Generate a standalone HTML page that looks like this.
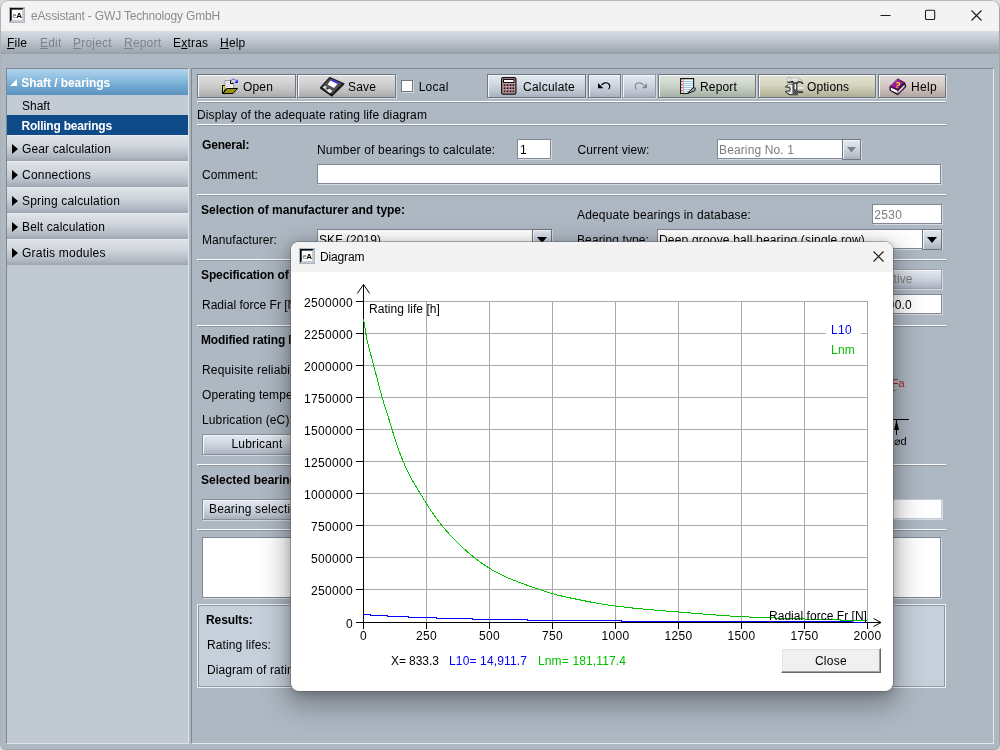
<!DOCTYPE html>
<html><head><meta charset="utf-8"><title>eAssistant</title>
<style>
*{box-sizing:border-box;margin:0;padding:0}
html,body{width:1000px;height:750px;overflow:hidden;background:#dcdcdc;font-family:"Liberation Sans",sans-serif;font-size:12px;color:#000}
.a{position:absolute;white-space:nowrap}
.t{position:absolute;white-space:nowrap;line-height:14px;height:14px;letter-spacing:.15px}
.b{font-weight:bold;letter-spacing:-.1px}
#win{will-change:transform;position:absolute;left:0;top:0;width:1000px;height:750px;border-radius:8px 8px 6px 6px;overflow:hidden;background:#aeb8c3}
#winb{position:absolute;left:0;top:0;width:1000px;height:750px;border:1px solid #a4a4a4;border-top-color:#b9b9b9;border-left-color:#b0b0b0;border-radius:8px 8px 6px 6px;pointer-events:none}
#tbar{position:absolute;left:0;top:0;width:1000px;height:31px;background:#f3f3f3}
#mbar{position:absolute;left:0;top:31px;width:1000px;height:23px;background:linear-gradient(#d7dce3 0%,#c4cad3 35%,#abb3bd 72%,#98a0ab 100%)}
.mi{position:absolute;top:5px;line-height:15px;font-size:12px;letter-spacing:.2px}
.mi u{text-decoration-thickness:1px;text-underline-offset:1px}
.dis{color:#7b828b}
/* sidebar */
#side{position:absolute;left:6px;top:68px;width:183px;height:676px;border:1px solid #7e8893;border-right-color:#dfe4ea;border-bottom-color:#dfe4ea;background:#c1c9d2}
.sh{position:absolute;left:0;width:181px}
.acc{height:26px;background:linear-gradient(#e0e4e9 0%,#ccd2d9 45%,#b3bac4 80%,#9da5b0 100%);border-top:1px solid #e9ecef}
.tri{position:absolute;left:5px;top:7.5px;width:0;height:0;border-left:6px solid #000;border-top:5px solid transparent;border-bottom:5px solid transparent}
/* main */
#main{position:absolute;left:191px;top:68px;width:803px;height:676px;border:1px solid #7e8893;border-right-color:#e4e8ee;border-bottom-color:#e4e8ee}
.sep{position:absolute;left:196px;width:749px;height:2px;border-top:1px solid #fff;border-bottom:1px solid #8d96a1;border-left:1px solid #fff}
.btn{position:absolute;height:24px;border:1px solid #707780;box-shadow:inset 1px 1px 0 #f4f6f8,1px 1px 0 #d3d9df;text-align:center;line-height:22px;white-space:nowrap;letter-spacing:.3px}
.g1{background:linear-gradient(#dedede 0%,#cfcfcf 45%,#b9b9b9 80%,#aaa 100%)}
.g2{background:linear-gradient(#e3e8f0 0%,#d0d7e1 45%,#b9c1cd 80%,#a8b1be 100%)}
.g3{background:linear-gradient(#dfe5dd 0%,#cdd5cb 45%,#b5beb3 80%,#a5afa3 100%)}
.g4{background:linear-gradient(#e4e4d2 0%,#d5d5c0 45%,#bdbda6 80%,#adad96 100%)}
.g5{background:linear-gradient(#e3dbd7 0%,#d4cbc7 45%,#beb3af 80%,#afa4a0 100%)}
.fld{position:absolute;height:20px;background:#fff;border:1px solid #7f8995;box-shadow:1px 1px 0 #d5dae0;line-height:18px;padding-top:1px;padding-left:2px;white-space:nowrap;letter-spacing:.15px}
.gray{color:#7d7d7d}
/* dialog */
#dlg{position:absolute;left:291px;top:242px;width:602px;height:449px;background:#fff;border-radius:8px;box-shadow:0 0 0 1px rgba(90,95,100,.45),0 10px 28px 4px rgba(0,0,0,.33),0 2px 10px rgba(0,0,0,.2);overflow:hidden}
#dtb{position:absolute;left:0;top:0;width:602px;height:30px;background:#f3f3f3}
svg text{font-family:"Liberation Sans",sans-serif;font-size:12px}
</style></head><body>
<div id="win">
<div id="tbar">
  <svg class="a" style="left:9px;top:7px" width="16" height="16" viewBox="0 0 16 16"><rect width="16" height="16" fill="#a9b7c6"/><path d="M1 1H15L13.500 2.600H2.600V13.500L1 15Z" fill="#0a0a0a"/><path d="M15 1V15H1L3 13H13V3Z" fill="#cbcbcb"/><rect x="3" y="3" width="10" height="10" fill="#fff"/><text x="7.300" y="11" style="font-size:8px;font-weight:bold" fill="#000">A</text><text x="3.600" y="11" style="font-size:7px;font-style:italic" fill="#555">e</text></svg>
  <div class="a" style="left:31px;top:8px;font-size:12px;line-height:16px;color:#8b8b8b;letter-spacing:-.17px">eAssistant - GWJ Technology GmbH</div>
  <svg class="a" style="left:861px;top:1px" width="138" height="30" viewBox="0 0 138 30"><g stroke="#1a1a1a" stroke-width="1.1" fill="none"><path d="M19.5 14.5h10"/><rect x="64.500" y="9.300" width="9.200" height="9.200" rx="1.300"/><path d="M110.500 9.500l10 10M120.500 9.500l-10 10"/></g></svg>
</div>
<div id="mbar">
  <div class="mi" style="left:7px"><u>F</u>ile</div>
  <div class="mi dis" style="left:40px"><u>E</u>dit</div>
  <div class="mi dis" style="left:73px"><u>P</u>roject</div>
  <div class="mi dis" style="left:124px"><u>R</u>eport</div>
  <div class="mi" style="left:173px">E<u>x</u>tras</div>
  <div class="mi" style="left:220px"><u>H</u>elp</div>
</div>

<div id="side">
  <div class="sh" style="top:0;height:26px;background:linear-gradient(#b0d4ec 0%,#8fbfe0 35%,#6ea5cf 70%,#5c94c0 100%)">
    <svg class="a" style="left:2px;top:9px" width="9" height="9"><path d="M8 1V8H1Z" fill="#fff"/></svg>
    <div class="t b" style="left:14.200px;top:7px;color:#fff;letter-spacing:-0.064px">Shaft / bearings</div>
  </div>
  <div class="sh" style="top:26px;height:20px;background:#c3cbd4"><div class="t" style="left:15px;top:4px;letter-spacing:-0.004px">Shaft</div></div>
  <div class="sh" style="top:46px;height:20px;background:#0f4b88"><div class="t b" style="left:14.500px;top:4px;color:#fff;letter-spacing:-.23px">Rolling bearings</div></div>
  <div class="sh acc" style="top:66px"><i class="tri"></i><div class="t" style="left:15px;top:6px;letter-spacing:0.143px">Gear calculation</div></div>
  <div class="sh acc" style="top:92px"><i class="tri"></i><div class="t" style="left:15px;top:6px;letter-spacing:0.209px">Connections</div></div>
  <div class="sh acc" style="top:118px"><i class="tri"></i><div class="t" style="left:15px;top:6px;letter-spacing:0.182px">Spring calculation</div></div>
  <div class="sh acc" style="top:144px"><i class="tri"></i><div class="t" style="left:15px;top:6px;letter-spacing:0.143px">Belt calculation</div></div>
  <div class="sh acc" style="top:170px"><i class="tri"></i><div class="t" style="left:15px;top:6px;letter-spacing:.21px">Gratis modules</div></div>
</div>

<div id="main"></div>
<!-- MAINCONTENT --><div class="a" style="left:1px;top:1px;width:0;height:0">
<!-- toolbar -->
<div class="btn g1" style="left:196px;top:73px;width:99px"></div>
<div class="t" style="left:242px;top:79px;letter-spacing:0.161px">Open</div>
<div class="btn g1" style="left:296px;top:73px;width:99px"></div>
<div class="t" style="left:347px;top:79px;letter-spacing:0.162px">Save</div>
<div class="a" style="left:400px;top:79px;width:12px;height:12px;background:#fff;border:1px solid #6f7882;box-shadow:1px 1px 0 #d3d9df"></div>
<div class="t" style="left:417.700px;top:79px;letter-spacing:0.263px">Local</div>
<div class="btn g2" style="left:486px;top:73px;width:99px"></div>
<div class="t" style="left:522px;top:79px;letter-spacing:0.219px">Calculate</div>
<div class="btn g2" style="left:587px;top:73px;width:33px"></div>
<div class="btn g2" style="left:621px;top:73px;width:34px;border-color:#929ba6"></div>
<div class="btn g3" style="left:657px;top:73px;width:98px"></div>
<div class="t" style="left:699px;top:79px;letter-spacing:0.164px">Report</div>
<div class="btn g4" style="left:757px;top:73px;width:118px"></div>
<div class="t" style="left:806px;top:79px;letter-spacing:0.092px">Options</div>
<div class="btn g5" style="left:877px;top:73px;width:68px"></div>
<div class="t" style="left:910px;top:79px;letter-spacing:0.330px">Help</div>
<!-- open icon at (222,78) page => wrapper coords (221,77) -->
<svg class="a" style="left:221px;top:77px" width="17" height="17" viewBox="0 0 17 17">
 <path d="M0.500 7.500H3.500V11L1.200 15.500H0.500Z" fill="#d8d24e" stroke="#000"/>
 <path d="M3 2.500H8.500L11.500 5.500V10.500H3Z" fill="#f6f6f6" stroke="#8a8a8a" stroke-width=".8"/>
 <path d="M4.500 4.500H7.500M4.500 6.500H9.500M4.500 8.500H9.500" stroke="#c8c8c8" stroke-width=".8"/>
 <path d="M8.500 2.500V5.500H11.500" fill="none" stroke="#000" stroke-width="1"/>
 <path d="M5 10.500H15.500L11 15.500H0.800Z" fill="#97930d" stroke="#000"/>
 <path d="M9.300 2.300Q11.800 -.3 14.300 2.800" fill="none" stroke="#3232e6" stroke-width="1" stroke-dasharray="1.6 .7"/>
 <path d="M15.800 1.300V5H12.300Z" fill="#1c1cff"/>
</svg>
<!-- save icon at (320,77) -->
<svg class="a" style="left:319px;top:76px" width="25" height="20" viewBox="0 0 25 20">
 <path d="M9.700 .600L23.600 6.700L11.700 18.400L.600 10.600Z" fill="#505050" stroke="#222" stroke-width="1.400"/>
 <path d="M.600 10.600L11.700 18.400L23.600 6.700" fill="none" stroke="#1a1a1a" stroke-width="2"/>
 <path d="M10.500 3.500L17.500 7L14 11L7.500 7.500Z" fill="#fff"/>
 <path d="M11.500 2.800L18.500 6.300" stroke="#3a3af0" stroke-width="1.800"/>
 <path d="M2.700 10.300L5.500 8.700L12.500 14L9.800 16.200Z" fill="#e9e9e9"/>
 <path d="M5.300 11L7.200 10L9.300 11.600L7.500 12.800Z" fill="#333"/>
</svg>
<!-- calc icon at (501,77) -->
<svg class="a" style="left:500px;top:76px" width="16" height="18" viewBox="0 0 16 18">
 <rect x=".6" y=".6" width="14.300" height="16.600" rx="1.600" fill="#c79da2" stroke="#111" stroke-width="1.200"/>
 <rect x="2.500" y="2.500" width="10.500" height="3" fill="#fff" stroke="#111"/>
 <g fill="#111"><rect x="2.700" y="7.300" width="1.700" height="1.700"/><rect x="5.700" y="7.300" width="1.700" height="1.700"/><rect x="8.700" y="7.300" width="1.700" height="1.700"/><rect x="11.500" y="7.300" width="1.700" height="1.700"/>
 <rect x="2.700" y="10.400" width="1.700" height="1.700"/><rect x="5.700" y="10.400" width="1.700" height="1.700"/><rect x="8.700" y="10.400" width="1.700" height="1.700"/><rect x="11.500" y="10.400" width="1.700" height="1.700"/>
 <rect x="2.700" y="13.500" width="1.700" height="1.700"/><rect x="5.700" y="13.500" width="1.700" height="1.700"/><rect x="8.700" y="13.500" width="1.700" height="1.700"/><rect x="11.500" y="13.500" width="1.700" height="1.700"/></g>
</svg>
<!-- undo at page (598..610, 81..89) -->
<svg class="a" style="left:596px;top:79px" width="16" height="12" viewBox="0 0 16 12">
 <path d="M1 3V8.300H6.300Z" fill="#000"/>
 <path d="M4.500 5.200C6.500 2.600 9.800 1.900 11.800 4C13.200 5.500 12.800 7.600 11.700 9.300" fill="none" stroke="#000" stroke-width="1.150"/>
</svg>
<svg class="a" style="left:631px;top:79px" width="16" height="12" viewBox="0 0 16 12">
 <path d="M15 3V8.300H9.700Z" fill="#8a8a8a"/>
 <path d="M11.500 5.200C9.500 2.600 6.200 1.900 4.200 4C2.800 5.500 3.200 7.600 4.300 9.300" fill="none" stroke="#8a8a8a" stroke-width="1.200"/>
</svg>
<!-- report at (680,78) -->
<svg class="a" style="left:679px;top:77px" width="17" height="17" viewBox="0 0 17 17">
 <path d="M.600 .600H13.600V9.500L7.500 15.500H.600Z" fill="#fdfdfd" stroke="#111" stroke-width="1.100"/>
 <path d="M4 3.500H13M4 5.500H13M4 7.500H13M4 9.500H12M4 11.500H10M4 13.500H8" stroke="#8cc2ea" stroke-width=".9"/>
 <path d="M3.200 1V15" stroke="#f07070" stroke-width="1"/>
 <path d="M7.500 15.500L13.600 9.500L15.300 10.300L14.700 12.800Z" fill="#b0b0b0" stroke="#111" stroke-width="1"/>
 <g fill="#333"><rect x="1.400" y="3" width="1" height="1"/><rect x="1.400" y="6" width="1" height="1"/><rect x="1.400" y="9" width="1" height="1"/><rect x="1.400" y="12" width="1" height="1"/></g>
</svg>
<!-- options at (785,77) -->
<svg class="a" style="left:784px;top:76px" width="20" height="20" viewBox="0 0 20 20">
 <defs><linearGradient id="shg" x1="0" y1="0" x2="0" y2="1"><stop offset="0" stop-color="#fff"/><stop offset=".55" stop-color="#bdbdbd"/><stop offset="1" stop-color="#6a6a6a"/></linearGradient>
 <pattern id="chk" x=".3" y=".8" width="2" height="2" patternUnits="userSpaceOnUse"><rect width="2" height="2" fill="#0a0a0a"/><rect width="1" height="1" fill="#9a9a9a"/><rect x="1" y="1" width="1" height="1" fill="#9a9a9a"/></pattern></defs>
 <path d="M7.800 7.300Q3.200 6.300 .400 9.900L4.600 10.400Q5.700 12.200 4.600 14L.400 14.300Q3.200 18.600 8.400 17.600Z" fill="#d2d2d2" stroke="#151515" stroke-width=".9"/>
 <path d="M3 8.300Q5 7.600 7 8.200L6.600 10.500Q6.900 12.200 6.600 14L5.500 16.800" fill="none" stroke="#fff" stroke-width="1"/>
 <rect x="12.300" y="10.300" width="5.800" height="4.700" fill="url(#shg)"/>
 <path d="M12.300 15.200H18.100" stroke="#0a0a0a" stroke-width="1.100"/>
 <rect x="8.500" y="5.800" width="3.800" height="12.300" fill="#111"/>
 <rect x="9.400" y="6.300" width="1.900" height="6.400" fill="#f1f1f1"/>
 <rect x="7.800" y="12.800" width="5" height="5.400" fill="url(#chk)"/>
 <path d="M2.400 .600H5.800L6.800 1.100H12.600Q16.800 1.500 18.100 6.900Q16.300 4.500 13.200 4.800L12.400 6H8.400L7.400 4.600Q5 5.600 2.400 5.100Z" fill="#d9d9d9" stroke="#8a8a8a" stroke-width=".5"/>
 <path d="M2.400 5.100Q5 5.600 7.400 4.600L8.400 6H12.400L13.200 4.800Q16.300 4.500 18.100 6.900" fill="none" stroke="#0d0d0d" stroke-width="1.200"/>
 <path d="M3.200 1.600V4.200M7.500 2H12.500" stroke="#fff" stroke-width="1"/>
</svg>
<!-- help at (889,78) -->
<svg class="a" style="left:888px;top:77px" width="19" height="19" viewBox="0 0 19 19">
 <path d="M1.100 8.200L1.100 12.400L8.800 16.800L16.900 8.800L15.600 4.600L8.800 11.700Z" fill="#0c0c0c" stroke="#0c0c0c" stroke-width=".9" stroke-linejoin="round"/>
 <path d="M2 9.600L8.700 12.800V15.600L2 12.300Z" fill="#fafafa"/>
 <path d="M9.300 12.700L15.300 6.400L15.900 8.400L9.300 15.400Z" fill="#d4d4d4"/>
 <path d="M9 16.300L16.500 8.700" stroke="#a018a6" stroke-width=".9" stroke-dasharray="1 .6"/>
 <path d="M8.800 .800L15.500 4.600L8.800 11.700L1.100 8.200Z" fill="#9a14a0" stroke="#2a002c" stroke-width=".7" stroke-linejoin="round"/>
 <path d="M1.100 8.200V11.800" stroke="#9a14a0" stroke-width="1.100"/>
 <path d="M2.300 7.300L8.300 1.900" stroke="#e7c3ea" stroke-width=".8" stroke-dasharray=".8 .8"/>
 <text x="6.300" y="10" style="font-size:8.500px;font-weight:bold" fill="#f5ee14" transform="rotate(14 9 6)">?</text>
</svg>


<div class="sep" style="top:100px"></div>
<div class="t" style="left:196px;top:107px;letter-spacing:0.121px">Display of the adequate rating life diagram</div>
<div class="sep" style="top:123px"></div>

<div class="t b" style="left:201px;top:137px;letter-spacing:-.18px">General:</div>
<div class="t" style="left:316px;top:142px;letter-spacing:.175px">Number of bearings to calculate:</div>
<div class="fld" style="left:516px;top:138px;width:34px;letter-spacing:0.327px">1</div>
<div class="t" style="left:576.5px;top:142px;letter-spacing:0.101px">Current view:</div>
<div class="fld gray" style="left:716px;top:138px;width:144px;padding-left:1px;letter-spacing:0.125px">Bearing No. 1</div>
<div class="btn g2" style="left:841px;top:138px;width:19px;height:21px;box-shadow:inset 1px 1px 0 #f4f6f8"><svg class="a" style="left:4px;top:7px" width="9" height="6"><path d="M0 0H9L4.500 5.500Z" fill="#7a828c"/></svg></div>
<div class="t" style="left:201px;top:167px;letter-spacing:0.081px">Comment:</div>
<div class="fld" style="left:316px;top:163px;width:624px"></div>
<div class="sep" style="top:193px"></div>

<div class="t b" style="left:200px;top:202px;letter-spacing:-0.020px">Selection of manufacturer and type:</div>
<div class="t" style="left:576px;top:207px;letter-spacing:0.151px">Adequate bearings in database:</div>
<div class="fld gray" style="left:871px;top:203px;width:70px;padding-left:1.300px;letter-spacing:0.327px">2530</div>
<div class="t" style="left:201px;top:232px;letter-spacing:0.074px">Manufacturer:</div>
<div class="fld" style="left:316px;top:228px;width:235px;padding-left:1px;letter-spacing:0.064px">SKF (2019)</div>
<div class="btn g2" style="left:531px;top:228px;width:20px;height:21px;box-shadow:inset 1px 1px 0 #f4f6f8"><svg class="a" style="left:4px;top:7px" width="11" height="6"><path d="M0 0H10L5 6Z" fill="#000"/></svg></div>
<div class="t" style="left:576px;top:232px;letter-spacing:0.099px">Bearing type:</div>
<div class="fld" style="left:656px;top:228px;width:285px;padding-left:1px;letter-spacing:0.177px">Deep groove ball bearing (single row)</div>
<div class="btn g2" style="left:921px;top:228px;width:20px;height:21px;box-shadow:inset 1px 1px 0 #f4f6f8"><svg class="a" style="left:4px;top:7px" width="11" height="6"><path d="M0 0H10L5 6Z" fill="#000"/></svg></div>
<div class="sep" style="top:258px"></div>

<div class="t b" style="left:200px;top:267px;letter-spacing:-0.107px">Specification of load:</div>
<div class="btn g2 gray" style="left:840px;top:268px;width:101px;height:20px;line-height:18px;box-shadow:inset 1px 1px 0 #f4f6f8,1px 1px 0 #d5dae0;border-color:#9aa3ae;letter-spacing:0.081px">Inactive</div>
<div class="t" style="left:201px;top:297px;letter-spacing:0.015px">Radial force Fr [N]:</div>
<div class="fld" style="left:841px;top:293px;width:100px;padding-left:31px;letter-spacing:0.216px">1000.0</div>
<div class="sep" style="top:324px"></div>

<div class="t b" style="left:200px;top:332px;letter-spacing:-0.127px">Modified rating life:</div>
<div class="t" style="left:201px;top:362px;letter-spacing:0.165px">Requisite reliability:</div>
<div class="t" style="left:201px;top:387px;letter-spacing:0.088px">Operating temperature:</div>
<div class="t" style="left:201px;top:412px;letter-spacing:0.135px">Lubrication (eC):</div>
<div class="btn g2" style="left:201px;top:433px;width:110px;height:21px;line-height:19px;box-shadow:inset 1px 1px 0 #f4f6f8,1px 1px 0 #d5dae0;border-color:#858e99;letter-spacing:0.182px">Lubricant</div>
<div class="a" style="left:892px;top:389px;width:2px;height:1px;background:#b02020"></div><div class="t" style="left:890.5px;top:375px;color:#b02020;font-size:11.5px;letter-spacing:-0.210px">Fa</div>
<svg class="a" style="left:880px;top:414px" width="40" height="32"><path d="M0 4.500H28" stroke="#000" fill="none"/><path d="M15.500 5V20" stroke="#000"/><path d="M15.500 5L13 15H18Z" fill="#000"/><text x="12.500" y="29.500" style="font-size:11px">⌀d</text></svg>
<div class="sep" style="top:463px"></div>

<div class="t b" style="left:200px;top:472px;letter-spacing:-0.002px">Selected bearing:</div>
<div class="btn g2" style="left:201px;top:498px;width:130px;height:21px;line-height:19px;text-align:left;padding-left:6px;box-shadow:inset 1px 1px 0 #f4f6f8,1px 1px 0 #d5dae0;border-color:#858e99;letter-spacing:0.173px">Bearing selection</div>
<div class="fld" style="left:400px;top:498px;width:541px;border-color:#c4ccd5"></div>
<div class="sep" style="top:528px"></div>
<div class="fld" style="left:201px;top:536px;width:739px;height:61px"></div>

<div class="a" style="left:196px;top:603px;width:749px;height:84px;background:#c6d0db;border:1px solid #eef1f4;box-shadow:inset 0 0 0 1px #8f98a3"></div>
<div class="t b" style="left:205px;top:612px;letter-spacing:-.08px">Results:</div>
<div class="t" style="left:206px;top:637px;letter-spacing:0.100px">Rating lifes:</div>
<div class="t" style="left:206px;top:662px;letter-spacing:0.085px">Diagram of rating life:</div>
</div><!-- /MAINCONTENT -->
<!-- DIALOG -->
<div id="dlg">
 <div id="dtb">
  <svg class="a" style="left:8px;top:6px" width="16" height="16" viewBox="0 0 16 16"><rect width="16" height="16" fill="#a9b7c6"/><path d="M1 1H15L13.500 2.600H2.600V13.500L1 15Z" fill="#0a0a0a"/><path d="M15 1V15H1L3 13H13V3Z" fill="#cbcbcb"/><rect x="3" y="3" width="10" height="10" fill="#fff"/><text x="7.300" y="11" style="font-size:8px;font-weight:bold" fill="#000">A</text><text x="3.600" y="11" style="font-size:7px;font-style:italic" fill="#555">e</text></svg>
  <div class="a" style="left:29px;top:7px;font-size:12px;line-height:16px;letter-spacing:-.15px">Diagram</div>
  <svg class="a" style="left:580.700px;top:8px" width="14" height="14"><path d="M1.500 1.500l10 10M11.500 1.500l-10 10" stroke="#1a1a1a" stroke-width="1.1" fill="none"/></svg>
 </div>
 <svg class="a" style="left:0;top:30px" width="602" height="419" viewBox="291 272 602 419" shape-rendering="crispEdges">
  <g stroke="#a9a9a9" stroke-width="1" fill="none">
   <path d="M364 301.500H868M364 333.500H868M364 365.500H868M364 397.500H868M364 429.500H868M364 461.500H868M364 493.500H868M364 525.500H868M364 557.500H868M364 589.500H868"/>
   <path d="M426.500 301V622M489.500 301V622M552.500 301V622M615.500 301V622M678.500 301V622M741.500 301V622M804.500 301V622M867.500 301V622"/>
  </g>
  <rect x="826" y="322" width="35" height="16" fill="#fff"/>
  <g stroke="#000" stroke-width="1" fill="none">
   <path d="M363.500 284V629M356 622.500H881"/>
   <path d="M356 301.500H363M356 333.500H363M356 365.500H363M356 397.500H363M356 429.500H363M356 461.500H363M356 493.500H363M356 525.500H363M356 557.500H363M356 589.500H363"/>
   <path d="M426.500 622V629M489.500 622V629M552.500 622V629M615.500 622V629M678.500 622V629M741.500 622V629M804.500 622V629M867.500 622V629"/>
  </g>
  <g stroke="#000" stroke-width="1" fill="none" shape-rendering="auto">
   <path d="M357.300 293.500L363.500 284.500L369.700 293.500M873.500 618.500L881 622.500L873.500 626.500"/>
  </g>
  <g shape-rendering="crispEdges" fill="none" stroke-width="1">
   <path id="gcurve" stroke="#00c000" d="M363.5 319.0 L366.5 337.5 L369.5 350.0 L372.5 360.8 L375.5 372.5 L378.5 384.1 L381.5 395.2 L384.5 405.4 L387.5 414.8 L390.5 424.2 L393.5 434.1 L396.5 443.6 L399.5 452.1 L402.5 459.8 L405.5 466.8 L408.5 473.1 L411.5 478.9 L414.5 484.1 L417.5 488.9 L420.5 493.8 L423.5 498.9 L426.5 503.8 L429.5 508.4 L432.5 512.9 L435.5 517.2 L438.5 521.3 L441.5 525.1 L444.5 528.7 L447.5 532.1 L450.5 535.4 L453.5 538.5 L456.5 541.6 L459.5 544.5 L462.5 547.4 L465.5 550.1 L468.5 552.8 L471.5 555.3 L474.5 557.7 L477.5 560.0 L480.5 562.3 L483.5 564.4 L486.5 566.4 L489.5 568.3 L492.5 570.1 L495.5 571.8 L498.5 573.4 L501.5 574.9 L504.5 576.3 L507.5 577.7 L510.5 578.9 L513.5 580.2 L516.5 581.3 L519.5 582.5 L522.5 583.6 L525.5 584.7 L528.5 585.7 L531.5 586.8 L534.5 587.8 L537.5 588.8 L540.5 589.9 L543.5 590.9 L546.5 591.9 L549.5 592.9 L552.5 593.7 L555.5 594.5 L558.5 595.3 L561.5 596.0 L564.5 596.7 L567.5 597.3 L570.5 598.0 L573.5 598.6 L576.5 599.2 L579.5 599.8 L582.5 600.4 L585.5 601.0 L588.5 601.6 L591.5 602.2 L594.5 602.8 L597.5 603.3 L600.5 603.8 L603.5 604.3 L606.5 604.8 L609.5 605.2 L612.5 605.7 L615.5 606.1 L618.5 606.4 L621.5 606.8 L624.5 607.1 L627.5 607.5 L630.5 607.8 L633.5 608.1 L636.5 608.4 L639.5 608.7 L642.5 609.0 L645.5 609.3 L648.5 609.5 L651.5 609.8 L654.5 610.1 L657.5 610.3 L660.5 610.6 L663.5 610.8 L666.5 611.1 L669.5 611.3 L672.5 611.5 L675.5 611.8 L678.5 612.0 L681.5 612.3 L684.5 612.5 L687.5 612.8 L690.5 613.0 L693.5 613.3 L696.5 613.5 L699.5 613.8 L702.5 614.0 L705.5 614.2 L708.5 614.5 L711.5 614.7 L714.5 614.9 L717.5 615.1 L720.5 615.4 L723.5 615.6 L726.5 615.8 L729.5 616.0 L732.5 616.1 L735.5 616.3 L738.5 616.5 L741.5 616.6 L744.5 616.8 L747.5 616.9 L750.5 617.1 L753.5 617.2 L756.5 617.3 L759.5 617.4 L762.5 617.6 L765.5 617.7 L768.5 617.8 L771.5 617.9 L774.5 618.0 L777.5 618.1 L780.5 618.2 L783.5 618.3 L786.5 618.4 L789.5 618.5 L792.5 618.6 L795.5 618.7 L798.5 618.8 L801.5 618.9 L804.5 619.0 L807.5 619.1 L810.5 619.2 L813.5 619.3 L816.5 619.4 L819.5 619.4 L822.5 619.5 L825.5 619.6 L828.5 619.7 L831.5 619.7 L834.5 619.8 L837.5 619.9 L840.5 620.0 L843.5 620.0 L846.5 620.1 L849.5 620.2 L852.5 620.2 L855.5 620.3 L858.5 620.4 L861.5 620.5 L864.5 620.5 L867.5 620.6"/>
   <path id="bcurve" stroke="#0000ff" d="M363 614.500H370V615.500H387V616.500H408V617.500H436V618.500H472V619.500H527V620.500H621V621.500H851V622.500H868"/>
  </g>
  <g text-anchor="end" fill="#000">
   <text x="353" y="306.7" style="letter-spacing:0.327px">2500000</text><text x="353" y="338.7" style="letter-spacing:0.327px">2250000</text><text x="353" y="370.7" style="letter-spacing:0.327px">2000000</text><text x="353" y="402.7" style="letter-spacing:0.327px">1750000</text><text x="353" y="434.7" style="letter-spacing:0.327px">1500000</text><text x="353" y="466.7" style="letter-spacing:0.327px">1250000</text><text x="353" y="498.7" style="letter-spacing:0.327px">1000000</text><text x="353" y="530.7" style="letter-spacing:0.327px">750000</text><text x="353" y="562.7" style="letter-spacing:0.327px">500000</text><text x="353" y="594.7" style="letter-spacing:0.327px">250000</text><text x="353" y="627.7" style="letter-spacing:0.327px">0</text>
  </g>
  <g text-anchor="middle" fill="#000">
   <text x="363.500" y="640" style="letter-spacing:0.327px">0</text><text x="426.500" y="640" style="letter-spacing:0.327px">250</text><text x="489.500" y="640" style="letter-spacing:0.327px">500</text><text x="552.500" y="640" style="letter-spacing:0.327px">750</text><text x="615.500" y="640" style="letter-spacing:0.327px">1000</text><text x="678.500" y="640" style="letter-spacing:0.327px">1250</text><text x="741.500" y="640" style="letter-spacing:0.327px">1500</text><text x="804.500" y="640" style="letter-spacing:0.327px">1750</text><text x="867.500" y="640" style="letter-spacing:0.327px">2000</text>
  </g>
  <text x="369" y="313" style="letter-spacing:0.064px">Rating life [h]</text>
  <text x="867" y="620" text-anchor="end" style="letter-spacing:0.034px">Radial force Fr [N]</text>
  <text x="831" y="334" fill="#0000ff" style="letter-spacing:0.327px">L10</text>
  <text x="831" y="354" fill="#00c000" style="letter-spacing:0.219px">Lnm</text>
  <text x="391" y="665" fill="#000" style="letter-spacing:-.08px">X= 833.3</text>
  <text x="449" y="665" fill="#0000ff" style="letter-spacing:0.148px">L10= 14,911.7</text>
  <text x="538" y="665" fill="#00c000" style="letter-spacing:0.138px">Lnm= 181,117.4</text>
 </svg>
 <div class="a" style="left:490px;top:406px;width:100px;height:25px;background:#f0f0f0;border:1px solid;border-color:#fff #696969 #696969 #fff;box-shadow:inset -1px -1px 0 #a0a0a0,inset 1px 1px 0 #e3e3e3;text-align:center;line-height:24px;letter-spacing:.3px">Close</div>
</div>
<!-- /DIALOG -->
<div id="winb"></div>
</div>
</body></html>
